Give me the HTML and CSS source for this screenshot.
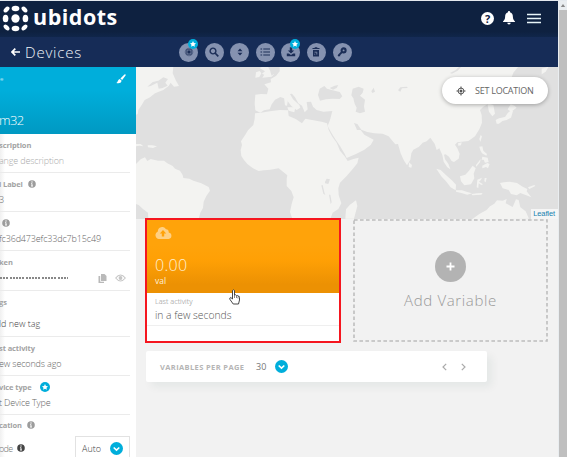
FILE: index.html
```html
<!DOCTYPE html>
<html lang="en">
<head>
<meta charset="utf-8">
<title>Devices</title>
<link rel="stylesheet" href="styles.css">
</head>
<body>
<svg class="defs" width="0" height="0">
  <defs>
    <symbol id="info" viewBox="0 0 8 8"><circle cx="4" cy="4" r="3.8" fill="currentColor"/><path d="M4 3.5v2.6M3.1 3.7H4M3 6h2" stroke="#fff" stroke-width=".9"/><circle cx="4" cy="2" r=".65" fill="#fff"/></symbol>
    <symbol id="star" viewBox="0 0 10 10"><circle cx="5" cy="5" r="5" fill="#00aedb"/><path d="M5 2l.95 1.9 2.05.3-1.5 1.5.35 2.1L5 6.8 3.150 7.800l.35-2.100L2 4.200l2.050-.3z" fill="#fff"/></symbol>
    <symbol id="drop" viewBox="0 0 13 13"><circle cx="6.500" cy="6.500" r="6.500" fill="#00aedb"/><path d="M3.700 5.500l2.800 2.600 2.800-2.600" fill="none" stroke="#fff" stroke-width="1.600"/></symbol>
    <symbol id="target" viewBox="0 0 10 10"><circle cx="5" cy="5" r="2.900" fill="none" stroke="currentColor" stroke-width="1"/><circle cx="5" cy="5" r="1.500" fill="currentColor"/><path d="M5 .5v2M5 7.500v2M.5 5h2M7.500 5h2" stroke="currentColor" stroke-width="1.100"/></symbol>
  </defs>
</svg>
<div class="window">
  <div class="page">
    <header class="brandbar">
      <svg class="mark" viewBox="0 0 28 28" width="27" height="27" fill="#fff">
        <circle cx="14" cy="14" r="4.300"/>
        <ellipse cx="14" cy="3.700" rx="4" ry="2.900"/><ellipse cx="14" cy="24.300" rx="4" ry="2.900"/>
        <ellipse cx="3.700" cy="14" rx="2.900" ry="4"/><ellipse cx="24.300" cy="14" rx="2.900" ry="4"/>
        <ellipse cx="4.700" cy="4.700" rx="3.600" ry="2.300" transform="rotate(-45 4.700 4.700)"/>
        <ellipse cx="23.300" cy="4.700" rx="3.600" ry="2.300" transform="rotate(45 23.300 4.700)"/>
        <ellipse cx="4.700" cy="23.300" rx="3.600" ry="2.300" transform="rotate(45 4.700 23.300)"/>
        <ellipse cx="23.300" cy="23.300" rx="3.600" ry="2.300" transform="rotate(-45 23.300 23.300)"/>
      </svg>
      <span class="brand">ubidots</span>
      <div class="account">
        <span class="help">?</span>
        <svg width="12" height="14" viewBox="0 0 12 14" fill="#fff"><path d="M6 0c.8 0 1 .5 1 1.200C9.300 1.800 9.800 3.600 9.900 6c.1 2.200.8 3.200 2.100 4.500V11H0v-.5C1.300 9.200 2 8.200 2.100 6 2.200 3.600 2.700 1.800 5 1.200 5 .5 5.200 0 6 0zM4.300 11.800h3.400a1.700 1.700 0 0 1-3.400 0z"/></svg>
        <svg width="14" height="11" viewBox="0 0 14 11"><path d="M0 1.500h14M0 5.500h14M0 9.500h14" stroke="#e8f5f8" stroke-width="1.300"/></svg>
      </div>
    </header>
    <nav class="toolbar">
      <svg class="back" width="9" height="8" viewBox="0 0 9 8"><path d="M4.300.7L1 4l3.300 3.300M1 4h8" fill="none" stroke="#fff" stroke-width="1.700"/></svg>
      <span class="title">Devices</span>
      <div class="tools">
        <span class="tool"><svg viewBox="0 0 10 10"><path d="M3.200 1v8M5 .5v9M6.800 1v8M1 3.200h8M.5 5h9M1 6.800h8" stroke="currentColor" stroke-width=".6" opacity=".6"/><rect x="2.200" y="2.200" width="5.600" height="5.600" rx="1.500" fill="#8592b0" stroke="currentColor" stroke-width=".8"/><path d="M3.400 3.400h3.200v3.200H3.400z" fill="currentColor"/></svg><svg class="pin"><use href="#star"/></svg></span>
        <span class="tool"><svg viewBox="0 0 10 10"><circle cx="4" cy="4" r="2.900" fill="none" stroke="currentColor" stroke-width="1.400"/><path d="M6 6l3.300 3.300" stroke="currentColor" stroke-width="1.700"/></svg></span>
        <span class="tool"><svg viewBox="0 0 10 10" fill="currentColor"><path d="M5 1.500l2.500 2.800h-5zM5 8.500L2.500 5.700h5z"/></svg></span>
        <span class="tool"><svg viewBox="0 0 10 10"><path d="M.5 2h1.600M3.300 2H10M.5 5h1.600M3.300 5H10M.5 8h1.600M3.300 8H10" stroke="currentColor" stroke-width="1.200"/></svg></span>
        <span class="tool"><svg viewBox="0 0 10 10" fill="currentColor"><path d="M3.800.3h2.400v3.200h2L5 6.600 1.800 3.500h2zM.8 6.500h2.100L5 8l2.100-1.500h2.100v2.800H.8z"/></svg><svg class="pin"><use href="#star"/></svg></span>
        <span class="tool"><svg viewBox="0 0 10 10"><path d="M1.500 1.500h7M3.700.8h2.600" stroke="currentColor" stroke-width="1.200"/><path d="M2 3h6v6.500H2z" fill="currentColor"/><path d="M3.500 5.200h2.300v2.300M3.700 7.700v-1" fill="none" stroke="#8592b0" stroke-width=".8"/></svg></span>
        <span class="tool"><svg viewBox="0 0 10 10"><circle cx="6.600" cy="3.400" r="2" fill="none" stroke="currentColor" stroke-width="2.100"/><path d="M5 5L1.200 8.800M1 8.300h2.200" stroke="currentColor" stroke-width="1.800"/></svg></span>
      </div>
    </nav>
    <main class="main">
      <aside class="sidebar">
        <div class="hero">
          <div class="hero-top"><span>e</span><svg width="10" height="10" viewBox="0 0 10 10" fill="#fff"><path d="M8.400.4Q9.900-.1 9.700 1.200L6.200 6 4.400 4.500zM3.700 5l1.900 1.700C5.200 9 3 9.700.3 8.900 1.900 8.500 1.700 5.700 3.700 5z"/></svg></div>
          <div class="name">m32</div>
        </div>
        <section class="row"><div class="label"><b>scription</b></div><div class="value faint">ange description</div></section>
        <section class="row"><div class="label"><b>l Label</b><svg class="i"><use href="#info"/></svg></div><div class="value">3</div></section>
        <section class="row"><div class="label only"><svg class="i"><use href="#info"/></svg></div><div class="value">fc36d473efc33dc7b15c49</div></section>
        <section class="row token"><div class="label"><b>ken</b></div>
          <div class="secret"><span class="dots"></span>
            <svg width="9" height="9" viewBox="0 0 9 9" fill="#b9b9b9"><path d="M3 0h3.500L8.500 2v5H3z"/><path d="M.5 2h1.700v5.800H6V9H.5z"/></svg>
            <svg width="11" height="8" viewBox="0 0 11 8"><path d="M.7 4Q5.500-2 10.300 4 5.500 10 .7 4z" fill="none" stroke="#c6c6c6" stroke-width="1.100"/><circle cx="5.500" cy="4" r="1.900" fill="#c6c6c6"/></svg>
          </div></section>
        <section class="row tags"><div class="label"><b>gs</b></div><div class="value dark">ld new tag</div></section>
        <section class="row"><div class="label"><b>st activity</b></div><div class="value">ew seconds ago</div></section>
        <section class="row"><div class="label"><b>vice type</b><svg class="type-star"><use href="#star"/></svg></div><div class="value">t Device Type</div></section>
        <section class="row location"><div class="label"><b>cation</b><svg class="i"><use href="#info"/></svg></div>
          <div class="mode"><span class="mode-name">ode</span><svg class="i ink"><use href="#info"/></svg><span class="select">Auto<svg width="13" height="13"><use href="#drop"/></svg></span></div></section>
      </aside>
      <div class="content">
        <div class="map">
          <svg class="world" viewBox="0 0 422 152" width="422" height="152">
            <g transform="translate(-6 -7) scale(.33333)">
              <path class="land" d="M18 20H130L128 40 138 62 147 78 132 80 122 68 116 78 100 90 75 100 60 112 44 120 35 135 25 150 23 162 18 164z"/>
              <path class="sea" d="M52 80L68 66 85 62 100 52 114 57 106 68 113 77 98 84 86 86 82 68 62 78z"/>
              <path class="land" d="M18 252l14 0 8 7-12-2-10 2zM53 256l14 0 14 3-12 5-15-2z"/>
              <path class="land" d="M18 312L32 298 45 292 52 303 62 297 84 302 102 302 112 310 128 318 135 326 150 332 158 345 160 354 178 356 190 362 214 370 236 381 240 392 229 408 221 425 219 444 211 458 206 476H55L54 458 39 447 26 435 18 432z"/>
              <path class="land" d="M375 160L392 158 420 154 450 150 474 151 476 168 497 177 516 190 526 176 550 181 575 185 591 190 596 210 607 230 620 248 630 272 645 290 653 303 670 297 686 293 682 310 670 325 650 348 630 368 625 385 626 405 634 430 625 447 608 458 601 476H487L480 456 485 432 491 412 484 393 470 378 470 357 472 346 459 335 446 325 421 329 402 331 386 333 368 324 352 312 342 300 334 288 332 270 336 255 333 244 345 226 354 211 370 195 374 176z"/>
              <path class="land" d="M376 151L374 130 376 104 393 102 411 103 415 86 403 73 423 67 422 57 438 48 449 34 449 20H1165L1150 38 1142 60 1120 105 1080 128 1060 140 1050 150 1055 165 1056 188 1048 208 1035 229 1015 243 995 245 982 247 975 254 982 265 989 281 986 296 972 306 965 303 957 290 947 283 942 284 945 298 955 311 961 328 952 322 941 305 937 285 928 265 920 270 914 251 901 233 890 244 878 248 867 260 850 269 844 280 841 299 831 316 821 300 812 280 804 252 796 253 787 242 776 229 758 221 733 220 712 216 694 209 682 192 672 189 681 210 692 210 703 224 731 239 722 255 702 270 678 282 650 294 643 280 630 258 616 238 604 218 593 198 600 180 607 153 580 155 560 150 549 140 543 125 530 126 533 148 524 157 516 137 505 130 495 112 486 101 480 102 489 118 508 135 511 143 500 150 484 138 468 117 451 111 435 119 425 133 419 148 402 151 391 158z"/>
              <path class="land" d="M389 24l9-4h16l5 10 13 12-7 8-28 3 6-9-7-3 9-7zM378 37l11-4 5 7-6 11-12 2z"/>
              <path class="sea" d="M564 105l5-19 14-8 8 8 17 5 21 5 8 13-8 8-22-1-19 2-18 4zM599 84l15-7 11-2-5 9-11 5zM668 86l18-6 15 6-3 12-8 9 15 12-3 20 3 16-15 5-13-5 3-12-6-12-4-16-6-9zM724 94l7-11 4 12-8 4zM804 91l7-9 20-2 2 4-17 1-5 10z"/>
              <path class="sea" d="M960 39l16-8 12-11h6l-11 12-17 9z"/>
              <path class="land" d="M462 112l7-5 5 12-3 18-6-1zM472 142l24 0-3 15-17-5z"/>
              <path class="sea" d="M585 365l5-9 10 2-5 14-10-2zM574 376l4-1 5 22 3 8-6-4zM597 404l4 0 4 23-3 5zM420 20h22l-1 12-16 15-4-12z"/>
              <path class="land" d="M1072 130l18 5 5 26-8 8-10-14zM1133 148l9-15 11 4 7 6-17 12zM1097 180l10-5 18-4 9-13 10-7 5 2-6 20-13 7-13 3-10 8-7 0zM1235 26l21-6-9 15-12 8z"/>
              <path class="land" d="M837 307l9 8-2 8-8-2zM984 250l11-3-2 9-8 1zM1052 225l4 4-5 17-3-9zM1048 260l9-1 3 13 11 10-2 5-13-7-5-9zM1057 290l16 3 3 13-11 2-4-9-6 0zM1057 317l15-8 7 3-5 13-6-4-11 4zM1038 315l14-18-2 10-11 13z"/>
              <path class="land" d="M919 326l13 4 15 14 20 18 11 12-1 17-15-9-14-18-13-14zM978 391l18 0 16 5 14 4-14 4-18-5-16-4zM990 349l16-5 11-12 11-15 9 8-6 16 2 14-10 18-20 3-10-12zM1042 359l14-6-4 8-5 4 12 8-5 2-8-5-1 14-5-2zM1064 354l6 0-3 13-4-3zM1110 369l12-2 17-2 22 4 17 11 14 7-2 7 14 18-15-6-18-7-11 7-17-4-7-12-18-5zM1025 402l16-2 17-1-4 5-27 2zM1194 382l19-7 3 3-18 9z"/>
              <path class="land" d="M1026 478L1048 462 1070 450 1080 439 1093 431 1101 421 1118 422 1130 417 1127 430 1148 441 1158 418 1166 420 1171 442 1187 454 1197 476zM646 476L648 448 659 435 678 421 682 438 672 476z"/>
            </g>
          </svg>
          <button class="locate"><svg width="10" height="10"><use href="#target"/></svg><span>SET LOCATION</span></button>
          <span class="credit">Leaflet</span>
        </div>
        <div class="cards">
          <article class="variable">
            <div class="reading">
              <svg width="17" height="12" viewBox="0 0 17 12"><path d="M4 12a4 4 0 0 1-1.200-7.600A4.400 4.400 0 0 1 11 2.200a3 3 0 0 1 2.700 3.300A3.300 3.300 0 0 1 13.700 12z" fill="#ffd083"/><path d="M8 3l3.200 3.500H9.200v3H6.800v-3h-2z" fill="#ffa20a"/></svg>
              <div class="number">0.00</div>
              <div class="var">val</div>
            </div>
            <div class="activity"><div class="caption">Last activity</div><div class="when">in a few seconds</div></div>
            <svg class="cursor" width="11" height="16" viewBox="0 0 11 16"><path d="M3.500 9V1.500Q4.500.2 5.500 1.500V6q1-.8 2 .5 1-.5 1.500.6 1.500-.3 1.500 1.200V11L9.500 15H4.200L1 10.500Q.2 8.500 1.800 8.500L3.500 10z" fill="#fff" stroke="#333" stroke-width=".9"/><path d="M5.500 6v3M7.500 7v2M9 7.500v2" stroke="#333" stroke-width=".6"/></svg>
          </article>
          <article class="add">
            <svg class="dash" width="195" height="123"><rect x="1" y="1" width="193" height="121" fill="none" stroke="#bdbdbd" stroke-width="1.600" stroke-dasharray="3.600 2.400"/></svg>
            <span class="plus"><svg width="9" height="9" viewBox="0 0 9 9"><path d="M4.500.5v8M.5 4.500h8" stroke="#fff" stroke-width="1.800"/></svg></span>
            <span class="add-text">Add Variable</span>
          </article>
        </div>
        <div class="pager">
          <span class="per">VARIABLES PER PAGE</span><span class="count">30</span><svg width="13" height="13"><use href="#drop"/></svg>
          <span class="arrows"><svg width="5" height="8" viewBox="0 0 5 8"><path d="M4.200.8L1 4l3.200 3.200"/></svg><svg width="5" height="8" viewBox="0 0 5 8"><path d="M.8.8L4 4 .8 7.200"/></svg></span>
        </div>
      </div>
    </main>
  </div>
  <div class="scroll"><svg width="10" height="9" viewBox="0 0 10 9"><path d="M5 3l2.200 3H2.800z" fill="#888"/></svg><div class="thumb"></div></div>
</div>
</body>
</html>
```
FILE: styles.css
```css
* { box-sizing: border-box; }
body { margin: 0; width: 568px; height: 462px; overflow: hidden; background: #fff; font-family: "Open Sans", sans-serif; }
svg { flex: none; display: block; }
.defs { position: absolute; }
.window { display: flex; width: 567px; height: 457px; border-top: 1px solid #e4e9ee; overflow: hidden; }
.page { width: 558px; flex: none; }
.brandbar { display: flex; align-items: center; height: 36px; background: linear-gradient(#0e2140 85%, #10264a); padding-left: 2px; padding-bottom: 2px; }
.brand { font: 700 21.500px/24px "Open Sans", sans-serif; color: #fff; margin: -3px 0 0 4px; letter-spacing: .5px; }
.account { margin-left: auto; margin-right: 17px; display: flex; align-items: center; }
.account svg { margin-left: 9px; }
.account svg + svg { margin-left: 12px; }
.help { width: 13px; height: 13px; border-radius: 50%; background: #fff; color: #10203f; font: 700 11px/13px "Open Sans", sans-serif; text-align: center; }
.toolbar { display: flex; align-items: center; height: 30px; background: #162c57; padding-left: 11px; }
.title { margin-left: 5px; font: 300 15px/20px "Open Sans", sans-serif; color: #f1f4fa; letter-spacing: .8px; width: 154px; }
.tools { display: flex; gap: 6.600px; }
.tool { position: relative; width: 19px; height: 19px; border-radius: 50%; background: #8592b0; color: #1c2e57; display: flex; align-items: center; justify-content: center; }
.tool svg { width: 10px; height: 10px; }
.tool .pin { position: absolute; top: -4px; right: 0; width: 10px; height: 10px; }
.main { display: flex; height: 390px; }
.sidebar { width: 136px; background: linear-gradient(90deg, #f0f0f0, #fff 5px); overflow: hidden; flex: none; }
.hero { height: 67px; background: linear-gradient(#00aedb 35%, #0099c2); padding: 7px 10px 0 0; color: #fff; }
.hero-top { display: flex; justify-content: space-between; font: 6px/10px "Open Sans", sans-serif; }
.hero-top span { opacity: .7; }
.name { font: 300 13px/18px "Open Sans", sans-serif; margin: 27px 0 0 -1px; letter-spacing: -.6px; }
.row { height: 39px; margin-right: 6px; padding-top: 6px; border-bottom: 1px solid #ebebeb; white-space: nowrap; }
.label { display: flex; align-items: center; height: 10px; color: #a3a3a3; font: 7.500px/10px "Open Sans", sans-serif; }
.label b { font-weight: 700; margin-left: -1px; letter-spacing: -.1px; }
.label .i { margin-left: 5px; }
.only .i { margin-left: 2px; }
.i { width: 8px; height: 8px; color: #9c9c9c; }
.type-star { width: 10px; height: 10px; margin-left: 8px; }
.value { margin: 4px 0 0 -1px; font: 300 9px/14px "Open Sans", sans-serif; color: #666; letter-spacing: -.15px; }
.faint { color: #aaa; }
.dark { color: #444; letter-spacing: 0; }
.token { height: 40px; }
.tags { height: 46px; }
.tags .value { margin-top: 10px; }
.secret { display: flex; align-items: center; height: 14px; margin-top: 4px; }
.dots { width: 68px; height: 2px; background: repeating-linear-gradient(90deg, #888 0 2px, transparent 2px 3.200px); margin-right: 30px; }
.secret svg + svg { margin-left: 8px; }
.location { height: 43px; border: 0; padding-top: 5px; }
.mode { display: flex; align-items: flex-start; height: 26px; margin-top: 6px; color: #777; font: 300 9px/25px "Open Sans", sans-serif; }
.mode-name { flex: none; width: 18px; margin-left: -1px; letter-spacing: -.7px; }
.ink { color: #444; margin-top: 8px; }
.select { display: flex; align-items: center; width: 55px; height: 28px; margin-left: auto; padding: 0 6px 4px 6px; border: 1px solid #e2e2e2; color: #444; justify-content: space-between; }
.content { width: 422px; background: #f2f2f2; position: relative; }
.map { position: relative; height: 152px; background: #e0e0e0; overflow: hidden; }
.land { fill: #f3f3f1; }
.sea { fill: #e0e0e0; }
.locate { position: absolute; top: 10px; right: 10px; width: 106px; height: 27px; border: 0; border-radius: 14px; background: #fff; box-shadow: 0 1px 4px rgba(0,0,0,.3); display: flex; align-items: center; padding: 0 0 0 14px; color: #555; }
.locate span { font: 9px/12px "Open Sans", sans-serif; margin-left: 9px; color: #666; letter-spacing: -.25px; }
.credit { position: absolute; right: 0; bottom: 0; background: #f5f5f5; padding: 0 3px 0 2px; font: 7.500px/10px "Liberation Sans", sans-serif; letter-spacing: -.1px; color: #1683b0; }
.cards { display: flex; height: 125px; margin: -1px 0 0 9px; gap: 12px; position: relative; }
.variable { position: relative; width: 196px; border: 2px solid #f5161f; background: #fff; }
.reading { height: 73px; background: linear-gradient(#ffa30a 35%, #ffa005 55%, #ec9103 88%); color: #fff0d5; padding: 7px 0 0 8px; }
.number { font: 300 16px/20px "Open Sans", sans-serif; margin-top: 16px; letter-spacing: .3px; }
.var { font: 8.500px/11px "Open Sans", sans-serif; }
.activity { height: 33px; padding: 4px 0 0 8px; border-bottom: 1px solid #efefef; }
.caption { font: 300 7.300px/9px "Open Sans", sans-serif; color: #888; }
.when { font: 300 10.300px/14px "Open Sans", sans-serif; color: #555; margin-top: 2px; }
.cursor { position: absolute; left: 82px; top: 69px; }
.add { position: relative; width: 195px; height: 123px; margin-top: 1px; display: flex; flex-direction: column; align-items: center; padding-top: 32px; }
.dash { position: absolute; left: 0; top: 0; }
.plus { width: 31px; height: 31px; border-radius: 50%; background: #b3b3b3; display: flex; align-items: center; justify-content: center; }
.add-text { font: 300 15px/20px "Open Sans", sans-serif; color: #999; margin-top: 8px; letter-spacing: .65px; }
.pager { display: flex; align-items: center; width: 341px; height: 31px; margin: 8px 0 0 10px; padding: 0 21px 0 14px; background: #fff; border-radius: 2px; box-shadow: 5px 5px 8px rgba(0,60,50,.06); }
.per { font: 700 7.500px/10px "Open Sans", sans-serif; color: #b5b5b5; width: 96px; white-space: nowrap; letter-spacing: .38px; }
.count { font: 9px/12px "Open Sans", sans-serif; color: #777; width: 19px; }
.arrows { display: flex; gap: 14px; margin-left: auto; }
.arrows path { fill: none; stroke: #aaa; stroke-width: 1.200; }
.scroll { width: 9px; background: #e9edf0; padding-left: 1px; height: 456px; }
.thumb { height: 447px; width: 8px; background: #bfbfbf; }
.scroll svg { margin-left: -1px; }
```
